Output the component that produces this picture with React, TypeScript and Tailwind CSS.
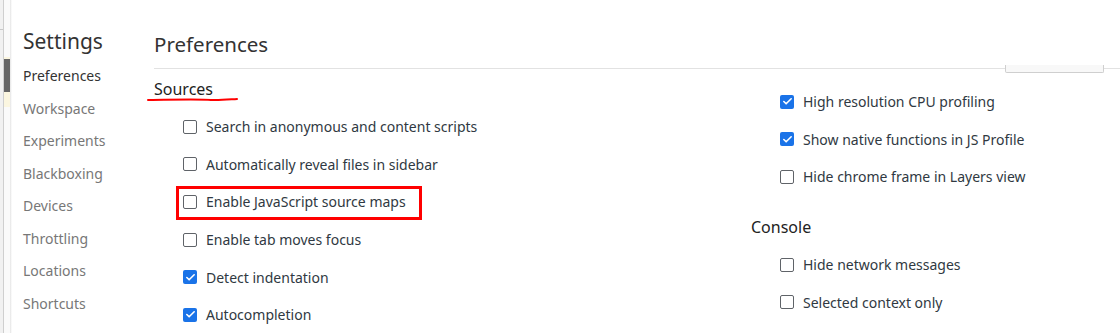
import { Check } from "lucide-react";

interface OptionProps {
  label: string;
  checked?: boolean;
  highlight?: boolean;
}

const sidebarItems = [
  "Preferences",
  "Workspace",
  "Experiments",
  "Blackboxing",
  "Devices",
  "Throttling",
  "Locations",
  "Shortcuts",
];

function Option({ label, checked = false, highlight = false }: OptionProps) {
  return (
    <div className="relative flex h-[37.6px] items-center pl-[29px]">
      {/* Annotation box round the row */}
      {highlight && (
        <div className="absolute left-[22px] top-[3px] h-[33.5px] w-[246px] border-[3px] border-[#ff0000]" />
      )}
      {checked ? (
        <span className="flex h-[14px] w-[14px] items-center justify-center rounded-[2px] bg-[#1a73e8]">
          <Check size={11} strokeWidth={3.5} color="#ffffff" />
        </span>
      ) : (
        <span className="h-[14px] w-[14px] rounded-[2px] border border-[#5f6368] bg-white" />
      )}
      <span className="ml-[9px] text-[14px] text-[#303942]">{label}</span>
    </div>
  );
}

function SectionTitle({ children }: { children: string }) {
  return (
    <div className="flex h-[38px] items-center text-[16px] text-[#222]">{children}</div>
  );
}

export default function App() {
  return (
    <div
      className="flex h-[333px] w-[1120px] overflow-hidden bg-white"
      style={{ fontFamily: '"Noto Sans", "Open Sans", sans-serif' }}
    >
      {/* Page behind the settings panel */}
      <div className="flex w-[12px] shrink-0">
        <div className="flex w-[3px] flex-col bg-[#f1f1f1]">
          <div className="h-[29px]" />
          <div className="h-px bg-[#c8c8c8]" />
        </div>
        <div className="w-px bg-[#cfcfcf]" />
        <div className="flex w-[6px] flex-col bg-[#fafafa]">
          <div className="h-[57px]" />
          <div className="h-[2px] bg-[#fbf6e0]" />
          <div className="h-[33px] bg-[#666666]" />
          <div className="h-[15px] bg-[#fbf6e0]" />
        </div>
        <div className="w-[2px] bg-gradient-to-r from-[#e4e4e4] to-white" />
      </div>

      {/* Sidebar */}
      <div className="flex w-[130px] shrink-0 flex-col pl-[11px]">
        <div className="flex h-[59.5px] items-center pt-[24px] text-[21px] text-[#333]">Settings</div>
        {sidebarItems.map((item, i) => (
          <div
            key={item}
            className={`flex h-[32.5px] items-center text-[14px] ${i === 0 ? "text-[#333]" : "text-[#777]"}`}
          >
            {item}
          </div>
        ))}
      </div>

      {/* Main */}
      <div className="flex min-w-0 flex-1 flex-col pl-[12px]">
        <div className="relative flex h-[69px] shrink-0 items-center border-b border-[#e2e2e2] pt-[20px] text-[20.5px] text-[#333]">
          Preferences
          <div className="absolute right-[16px] top-[65px] h-[8px] w-[99px] rounded-b-[2px] border border-t-0 border-[#cfcfcf] bg-[#f8f8f8]" />
        </div>

        <div className="flex">
          {/* Left column */}
          <div className="w-[597px] shrink-0 pt-[1px]">
            <div className="relative">
              <SectionTitle>Sources</SectionTitle>
              <svg className="absolute left-[-7px] top-[26px]" width="92" height="6" viewBox="0 0 92 6">
                <path
                  d="M1 4 C 30 3.5, 55 3, 64 4 C 72 4.5, 82 3.5, 90 3"
                  stroke="#ff0000"
                  strokeWidth="2"
                  fill="none"
                  strokeLinecap="round"
                />
              </svg>
            </div>
            <Option label="Search in anonymous and content scripts" />
            <Option label="Automatically reveal files in sidebar" />
            <Option label="Enable JavaScript source maps" highlight />
            <Option label="Enable tab moves focus" />
            <Option label="Detect indentation" checked />
            <Option label="Autocompletion" checked />
          </div>

          {/* Right column */}
          <div className="flex-1 pt-[14px]">
            <Option label="High resolution CPU profiling" checked />
            <Option label="Show native functions in JS Profile" checked />
            <Option label="Hide chrome frame in Layers view" />
            <div className="mt-[12px]">
              <SectionTitle>Console</SectionTitle>
            </div>
            <Option label="Hide network messages" />
            <Option label="Selected context only" />
          </div>
        </div>
      </div>
    </div>
  );
}
